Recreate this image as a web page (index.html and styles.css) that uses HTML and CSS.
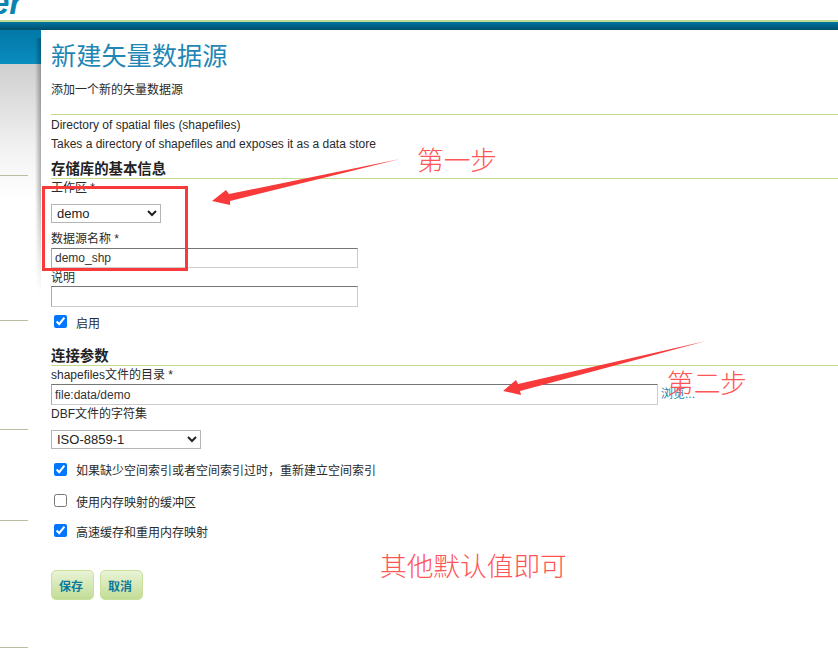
FILE: index.html
```html
<!DOCTYPE html>
<html lang="zh">
<head>
<meta charset="utf-8">
<title>新建矢量数据源</title>
<link rel="stylesheet" href="styles.css">
</head>
<body>
<header class="top"><span class="logo">er</span></header>
<div class="bar"></div>
<div class="layout">
  <aside class="side">
    <div class="side-blue"></div>
    <div class="side-rule r1"></div>
    <div class="side-rule r2"></div>
    <div class="side-rule r3"></div>
    <div class="side-rule r4"></div>
    <div class="side-rule r5"></div>
  </aside>
  <main class="panel">
    <h1 class="title">新建矢量数据源</h1>
    <p class="sub">添加一个新的矢量数据源</p>
    <div class="desc">
      <div class="desc-line">Directory of spatial files (shapefiles)</div>
      <div class="desc-line">Takes a directory of shapefiles and exposes it as a data store</div>
    </div>
    <h2 class="sec">存储库的基本信息</h2>
    <div class="label l-ws">工作区 *</div>
    <select class="sel sel-ws"><option>demo</option></select>
    <div class="label l-name">数据源名称 *</div>
    <input class="inp inp-s" type="text" value="demo_shp">
    <div class="label l-desc">说明</div>
    <input class="inp inp-s inp-d" type="text">
    <label class="chk c-on"><input type="checkbox" checked><span>启用</span></label>
    <h2 class="sec sec2">连接参数</h2>
    <div class="label l-dir">shapefiles文件的目录 *</div>
    <div class="dir-row">
      <input class="inp inp-l" type="text" value="file:data/demo">
      <a class="browse">浏览...</a>
    </div>
    <div class="label l-dbf">DBF文件的字符集</div>
    <select class="sel sel-cs"><option>ISO-8859-1</option></select>
    <label class="chk c1"><input type="checkbox" checked><span>如果缺少空间索引或者空间索引过时，重新建立空间索引</span></label>
    <label class="chk c2"><input type="checkbox"><span>使用内存映射的缓冲区</span></label>
    <label class="chk c3"><input type="checkbox" checked><span>高速缓存和重用内存映射</span></label>
    <div class="btns">
      <button class="btn" type="button">保存</button>
      <button class="btn" type="button">取消</button>
    </div>
  </main>
</div>
<svg class="marks" width="838" height="658" viewBox="0 0 838 658" aria-hidden="true">
  <rect x="43.5" y="187.5" width="143" height="82" fill="none" stroke="#f93a3a" stroke-width="3"/>
  <path d="M400 159 L229 194 L226 190 L212 201 L230 205 L230 201 Z" fill="#f93a3a"/>
  <path d="M706 341 L518 384 L516 380 L503 391 L521 395 L520 391 Z" fill="#f93a3a"/>
</svg>
<div class="note n1">第一步</div>
<div class="note n2">第二步</div>
<div class="note n3">其他默认值即可</div>
</body>
</html>
```
FILE: styles.css
```css
html, body { margin: 0; padding: 0; height: 658px; overflow: hidden; background: #fff; }
body {
  position: relative;
  width: 838px;
  font: 12px/15px "Liberation Sans", "Noto Sans CJK SC", sans-serif;
  color: #2a2a2a;
}
.top { height: 20px; border-bottom: 2px solid #bfdd92; overflow: hidden; position: relative; }
.logo {
  position: absolute;
  left: -9px;
  top: -15px;
  font: italic bold 33px/36px "Liberation Sans", sans-serif;
  color: #0a84b0;
}
.bar { height: 8px; background: linear-gradient(#0073a0, #004f6e); }
.layout { display: flex; height: 628px; }
.side {
  width: 41px;
  flex: none;
  background: linear-gradient(#cfcfcf 34px, #f2f2f2 120px, #fff 170px);
  display: flex;
  flex-direction: column;
}
.side-blue { height: 34px; background: linear-gradient(#0278a6, #0a8dbf); }
.side-rule { width: 28px; height: 1px; background: #b3bfa0; }
.r1 { margin-top: 111px; }
.r2 { margin-top: 144px; }
.r3 { margin-top: 108px; }
.r4 { margin-top: 90px; }
.r5 { margin-top: 126px; }
.panel {
  flex: 1;
  min-width: 0;
  background: #fff;
  border-top-left-radius: 8px;
  padding-left: 10px;
  display: flex;
  flex-direction: column;
  align-items: flex-start;
  position: relative;
}
.panel::before {
  content: "";
  position: absolute;
  left: -6px;
  top: 8px;
  width: 6px;
  height: 255px;
  background: linear-gradient(to right, rgba(0, 0, 0, 0), rgba(0, 0, 0, .3));
  -webkit-mask-image: linear-gradient(#000 60%, transparent);
  mask-image: linear-gradient(#000 60%, transparent);
}
.title { margin: 9px 0 0; font-size: 25.2px; line-height: 34px; font-weight: 400; color: #1f86b5; }
.sub { margin: 10px 0 0; line-height: 15px; }
.desc { margin-top: 16px; align-self: stretch; border-top: 1px solid #c3dd8f; }
.desc-line { height: 19px; line-height: 20px; }
.sec {
  margin: 7px 0 0;
  align-self: stretch;
  font-size: 14.4px;
  line-height: 18px;
  font-weight: 700;
  color: #222;
  border-bottom: 1px solid #c3dd8f;
}
.label { height: 15px; line-height: 17px; }
.l-ws { margin-top: 1px; }
.sel {
  display: block;
  height: 19px;
  padding: 0 0 0 1px;
  border: 1px solid #b5b5b5;
  border-radius: 0;
  background: #fff;
  font: 13px "Liberation Sans", sans-serif;
  color: #222;
}
.sel-ws { width: 110px; margin-top: 9px; }
.sel-cs { width: 150px; margin-top: 9px; }
.l-name { margin-top: 8px; }
.inp {
  display: block;
  box-sizing: border-box;
  height: 20px;
  padding: 0 3px;
  border: 1px solid #ccc;
  border-top-color: #767676;
  border-left-color: #aaa;
  font: 12px "Liberation Sans", sans-serif;
  color: #333;
  background: #fff;
}
.inp-s { width: 307px; margin-top: 2px; }
.inp-d { height: 21px; margin-top: 1px; }
.l-desc { margin-top: 2px; }
.chk { display: flex; align-items: flex-start; height: 16px; line-height: 18px; padding-left: 3px; }
.chk input { width: 13px; height: 13px; margin: 0 9px 0 0; flex: none; }
.c-on { margin-top: 8px; }
.sec2 { margin-top: 16px; }
.l-dir { margin-top: 1px; }
.dir-row { display: flex; align-items: center; margin-top: 2px; }
.inp-l { width: 607px; height: 21px; }
.browse { margin-left: 3px; color: #1a7fae; line-height: 15px; }
.l-dbf { margin-top: 1px; }
.c1 { margin-top: 14px; }
.c2 { margin-top: 15px; }
.c3 { margin-top: 14px; }
.c1 span { line-height: 16px; }
.btns { display: flex; gap: 6px; margin-top: 30px; }
.btn {
  width: 43px;
  height: 30px;
  padding: 0 3px 0 0;
  border: 1px solid #c8e09c;
  border-radius: 5px;
  background: linear-gradient(#e9f3d6, #c2dd96);
  font: 700 12px "Liberation Sans", "Noto Sans CJK SC", sans-serif;
  color: #0d7a9c;
}
.marks { position: absolute; left: 0; top: 0; pointer-events: none; }
.note {
  position: absolute;
  font-family: "Noto Sans CJK SC", sans-serif;
  font-weight: 300;
  font-size: 26.7px;
  line-height: 32px;
  color: #f55;
  white-space: nowrap;
}
.n1 { left: 417px; top: 143px; }
.n2 { left: 667px; top: 366px; }
.n3 { left: 380px; top: 549px; }
```
